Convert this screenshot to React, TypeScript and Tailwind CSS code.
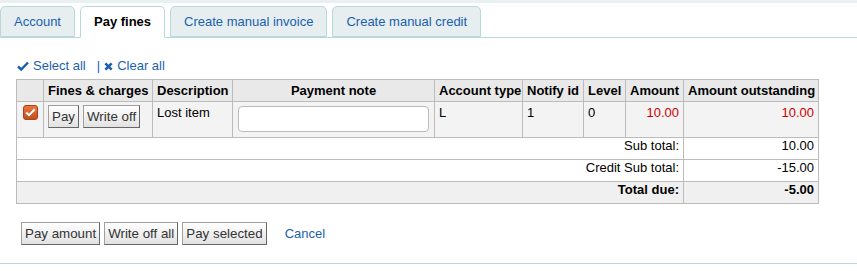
import React from 'react';

const font = { fontFamily: '"Liberation Sans", Arial, sans-serif' };

function Tab({ label, active }: { label: string; active?: boolean }) {
  return (
    <div
      className={`px-[13px] flex items-center border border-[#b9d8dc] rounded-t-[5px] text-[13px] ${
        active ? 'bg-white border-b-white font-bold text-black -mb-px h-[32px]' : 'bg-[#e6eef0] text-[#1b5fae] h-[31px]'
      }`}
    >
      {label}
    </div>
  );
}

function Btn({ children }: { children: React.ReactNode }) {
  return (
    <button
      type="button"
      className="h-[23px] px-[3px] text-[13.333px] leading-none text-[#333] border border-[#a0a0a0] border-r-[#666] border-b-[#666] bg-gradient-to-b from-white to-[#e2e2e2]"
    >
      {children}
    </button>
  );
}

export default function App() {
  const th = 'border border-[#bcbcbc] px-[4px] py-[2px] leading-[16px] font-bold text-[13px] text-black bg-[#e9e9e9] whitespace-nowrap text-left';
  const td = 'border border-[#bcbcbc] px-[4px] align-top text-[13px] leading-[16px]';
  return (
    <div className="w-[857px] h-[271px] bg-white relative text-black" style={font}>
      <div className="h-[3px] bg-[#e8f0f2]" />
      <div className="flex items-end gap-[5px] pt-[3px] border-b border-[#b9d8dc] h-[35px]">
        <Tab label="Account" />
        <Tab label="Pay fines" active />
        <Tab label="Create manual invoice" />
        <Tab label="Create manual credit" />
      </div>

      <div className="pl-[16px] pt-[20px]">
        <div className="flex items-center text-[13px] text-[#1b5fae] h-[16px]">
          <svg width="12" height="12" viewBox="0 0 12 12" className="ml-[1px] mr-[4px]">
            <path d="M1 6.5 L4.2 9.5 L11 2.5" stroke="#1b5fae" strokeWidth="2.4" fill="none" />
          </svg>
          <span>Select all</span>
          <span className="ml-[11px] mr-[4px]">|</span>
          <svg width="9" height="9" viewBox="0 0 10 10" className="mr-[4px]">
            <path d="M1.5 1.5 L8.5 8.5 M8.5 1.5 L1.5 8.5" stroke="#1b5fae" strokeWidth="2.8" fill="none" />
          </svg>
          <span>Clear all</span>
        </div>

        <table className="mt-[5px] border-collapse table-fixed w-[802px]">
          <colgroup>
            <col className="w-[27px]" />
            <col className="w-[109px]" />
            <col className="w-[80px]" />
            <col className="w-[202px]" />
            <col className="w-[88px]" />
            <col className="w-[61px]" />
            <col className="w-[42px]" />
            <col className="w-[58px]" />
            <col className="w-[135px]" />
          </colgroup>
          <thead>
            <tr className="h-[22px]">
              <th className={th}></th>
              <th className={th}>Fines &amp; charges</th>
              <th className={th}>Description</th>
              <th className={`${th} !text-center`}>Payment note</th>
              <th className={th}>Account type</th>
              <th className={th}>Notify id</th>
              <th className={th}>Level</th>
              <th className={th}>Amount</th>
              <th className={th}>Amount outstanding</th>
            </tr>
          </thead>
          <tbody>
            <tr className="h-[36px] bg-[#f3f3f3]">
              <td className={`${td} pt-[3px]`}>
                <div className="w-[15px] h-[15px] rounded-[3px] bg-gradient-to-b from-[#e8773f] to-[#c4501c] border border-[#a8441a] flex items-center justify-center ml-[2px]">
                  <svg width="11" height="9" viewBox="0 0 11 9">
                    <path d="M1.2 4.5 L4 7.2 L9.8 1.2" stroke="white" strokeWidth="2" fill="none" />
                  </svg>
                </div>
              </td>
              <td className={`${td} pt-[3px]`}>
                <div className="flex gap-[4px]">
                  <Btn>Pay</Btn>
                  <Btn>Write off</Btn>
                </div>
              </td>
              <td className={`${td} pt-[3px]`}>Lost item</td>
              <td className={`${td} pt-[4px] px-[5px]`}>
                <input className="block w-full h-[26px] border border-[#bbb] rounded-[4px] bg-white outline-none" />
              </td>
              <td className={`${td} pt-[3px]`}>L</td>
              <td className={`${td} pt-[3px]`}>1</td>
              <td className={`${td} pt-[3px]`}>0</td>
              <td className={`${td} pt-[3px] text-right text-[#cc0000]`}>10.00</td>
              <td className={`${td} pt-[3px] text-right text-[#cc0000]`}>10.00</td>
            </tr>
            <tr className="h-[22px]">
              <td colSpan={8} className={`${td} align-middle text-right`}>Sub total:</td>
              <td className={`${td} align-middle text-right`}>10.00</td>
            </tr>
            <tr className="h-[22px]">
              <td colSpan={8} className={`${td} align-middle text-right`}>Credit Sub total:</td>
              <td className={`${td} align-middle text-right`}>-15.00</td>
            </tr>
            <tr className="h-[22px] bg-[#f0f0f0]">
              <td colSpan={8} className={`${td} align-middle text-right font-bold`}>Total due:</td>
              <td className={`${td} align-middle text-right font-bold`}>-5.00</td>
            </tr>
          </tbody>
        </table>

        <div className="flex items-center gap-[4px] mt-[18px] ml-[5px]">
          <Btn>Pay amount</Btn>
          <Btn>Write off all</Btn>
          <Btn>Pay selected</Btn>
          <span className="ml-[14px] text-[13px] text-[#1b5fae]">Cancel</span>
        </div>
      </div>

      <div className="absolute left-0 right-0 top-[263px] border-t border-[#b9d8dc]" />
    </div>
  );
}
